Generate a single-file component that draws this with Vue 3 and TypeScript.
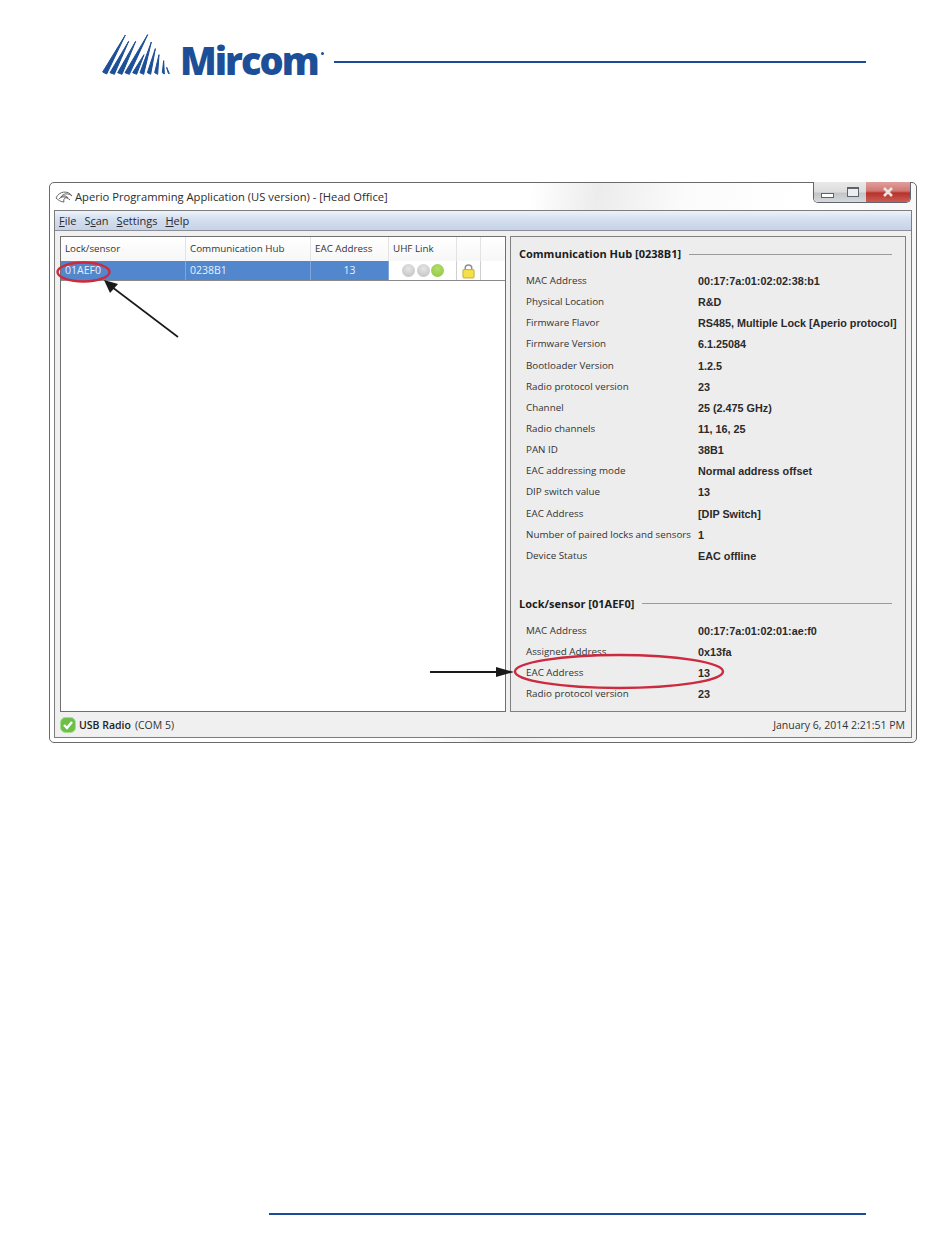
<script setup lang="ts">
interface Row { label: string; value: string }
const hubRows: Row[] = [
  { label: 'MAC Address', value: '00:17:7a:01:02:02:38:b1' },
  { label: 'Physical Location', value: 'R&D' },
  { label: 'Firmware Flavor', value: 'RS485, Multiple Lock [Aperio protocol]' },
  { label: 'Firmware Version', value: '6.1.25084' },
  { label: 'Bootloader Version', value: '1.2.5' },
  { label: 'Radio protocol version', value: '23' },
  { label: 'Channel', value: '25 (2.475 GHz)' },
  { label: 'Radio channels', value: '11, 16, 25' },
  { label: 'PAN ID', value: '38B1' },
  { label: 'EAC addressing mode', value: 'Normal address offset' },
  { label: 'DIP switch value', value: '13' },
  { label: 'EAC Address', value: '[DIP Switch]' },
  { label: 'Number of paired locks and sensors', value: '1' },
  { label: 'Device Status', value: 'EAC offline' }
]
const lockRows: Row[] = [
  { label: 'MAC Address', value: '00:17:7a:01:02:01:ae:f0' },
  { label: 'Assigned Address', value: '0x13fa' },
  { label: 'EAC Address', value: '13' },
  { label: 'Radio protocol version', value: '23' }
]
const strokes = [
  '38,156 50,162 106,45',
  '60,158 73,163 116,64',
  '83,158 96,163 137,64',
  '105,158 118,163 173,44',
  '128,158 140,163 162,104',
  '150,158 161,163 184,66',
  '172,158 182,163 196,86',
  '194,158 203,163 207,104',
  '217,158 223,162 221,122',
  '235,160 238,161 230,142'
]
</script>

<template>
  <div class="page">
    <header class="brand">
      <svg class="logo" viewBox="30 39 210 132" width="70" height="44">
        <polygon v-for="p in strokes" :key="p" :points="p" fill="#1c4f97" stroke="#1c4f97" stroke-width="3" stroke-linejoin="round" />
      </svg>
      <span class="wordmark">Mircom</span>
      <span class="reg"></span>
      <span class="rule"></span>
    </header>

    <section class="window">
      <div class="titlebar">
        <svg class="appicon" viewBox="0 0 18 14" width="18" height="14">
          <path d="M1 8 C4 1 13 0 17 6 C14 3 8 3 6 7 C9 5 12 6 13 8 C10 7 8 9 9 12 C6 12 3 10 1 8Z" fill="#fff" stroke="#666" stroke-width="1" />
          <path d="M4 9 C6 6 11 6 15 10" fill="none" stroke="#666" stroke-width="1" />
        </svg>
        <span class="title">Aperio Programming Application (US version) - [Head Office]</span>
        <div class="controls">
          <div class="ctl">
            <span class="min-glyph"></span>
          </div>
          <div class="ctl">
            <span class="max-glyph"></span>
          </div>
          <div class="ctl close">
            <svg viewBox="0 0 12 10" width="12" height="10">
              <path d="M2 1 L10 9 M10 1 L2 9" stroke="#e9e4e0" stroke-width="2.6" />
            </svg>
          </div>
        </div>
      </div>

      <div class="frame">
        <nav class="menubar">
          <span><u>F</u>ile</span>
          <span>S<u>c</u>an</span>
          <span><u>S</u>ettings</span>
          <span><u>H</u>elp</span>
        </nav>

        <div class="content">
          <div class="table">
            <div class="thead">
              <div class="c c1">Lock/sensor</div>
              <div class="c c2">Communication Hub</div>
              <div class="c c3">EAC Address</div>
              <div class="c c4">UHF Link</div>
              <div class="c c5"></div>
              <div class="c c6"></div>
            </div>
            <div class="trow">
              <div class="c c1 sel">01AEF0</div>
              <div class="c c2 sel">0238B1</div>
              <div class="c c3 sel num">13</div>
              <div class="c c4 leds">
                <i class="led off"></i>
                <i class="led off"></i>
                <i class="led on"></i>
              </div>
              <div class="c c5 lock">
                <svg viewBox="0 0 14 16" width="13" height="16">
                  <path d="M3.5 7 V4.5 C3.5 0.5 10.5 0.5 10.5 4.5 V7" fill="none" stroke="#8f8f8f" stroke-width="1.6" />
                  <rect x="1" y="6.5" width="12" height="9" rx="1" fill="#f4e04a" stroke="#c9a92a" />
                </svg>
              </div>
              <div class="c c6"></div>
            </div>
          </div>

          <div class="panel">
            <h3 class="legend first"><span>Communication Hub [0238B1]</span><i></i></h3>
            <dl class="props hub">
              <template v-for="r in hubRows" :key="r.label">
                <dt>{{ r.label }}</dt>
                <dd>{{ r.value }}</dd>
              </template>
            </dl>
            <h3 class="legend second"><span>Lock/sensor [01AEF0]</span><i></i></h3>
            <dl class="props lockp">
              <template v-for="r in lockRows" :key="r.label">
                <dt>{{ r.label }}</dt>
                <dd>{{ r.value }}</dd>
              </template>
            </dl>
          </div>
        </div>

        <footer class="status">
          <svg viewBox="0 0 16 16" width="16" height="16">
            <rect x="0.5" y="0.5" width="15" height="15" rx="5" fill="#6cc04a" stroke="#a9dc8f" />
            <path d="M4 8 L7 11 L12 5" fill="none" stroke="#fff" stroke-width="2.4" />
          </svg>
          <b>USB Radio</b>
          <span class="com">(COM 5)</span>
          <span class="date">January 6, 2014 2:21:51 PM</span>
        </footer>
      </div>
    </section>

    <div class="foot-rule"></div>

    <svg class="marks" viewBox="0 0 950 1260" width="950" height="1260">
      <ellipse cx="83.5" cy="272" rx="26" ry="9.5" fill="none" stroke="#cc2a3e" stroke-width="2.4" />
      <ellipse cx="619" cy="671.5" rx="104" ry="16.5" fill="none" stroke="#cc2a3e" stroke-width="2.4" />
      <path d="M178 337 L112 287" stroke="#1a1a1a" stroke-width="1.6" />
      <polygon points="104,280 118,284 110,293" fill="#1a1a1a" />
      <path d="M430 672 L498 672" stroke="#1a1a1a" stroke-width="1.8" />
      <polygon points="514,672 496,667 496,677" fill="#1a1a1a" />
    </svg>
  </div>
</template>

<style scoped>
.page {
  position: relative;
  width: 950px;
  height: 1260px;
  background: #fff;
  overflow: hidden;
  font-family: "Liberation Sans", Arial, sans-serif;
  color: #222;
}
.brand {
  display: flex;
  align-items: center;
  height: 58px;
  padding: 33px 84px 91px 100px;
}
.logo { flex: none; margin-top: -14px; }
.wordmark {
  margin-left: 10px;
  font-family: "Open Sans", sans-serif;
  font-weight: 800;
  font-size: 38px;
  line-height: 44px;
  letter-spacing: -2px;
  color: #1c4f97;
  margin-top: -4px;
}
.reg {
  width: 3px;
  height: 3px;
  border-radius: 50%;
  background: #1c4f97;
  margin: -18px 0 0 3px;
}
.rule {
  flex: 1;
  height: 2px;
  margin-left: 10px;
  background: #1d4a96;
}
.window {
  box-sizing: border-box;
  position: relative;
  width: 868px;
  height: 561px;
  margin-left: 49px;
  display: flex;
  flex-direction: column;
  border: 1px solid #6a6a6a;
  border-radius: 5px;
  background: linear-gradient(100deg, #fff 0%, #fff 50%, #ececec 57%, #fbfbfb 66%, #fff 78%, #f2f2f2 100%);
}
.titlebar {
  height: 27px;
  flex: none;
  display: flex;
  align-items: center;
  padding-left: 5px;
  position: relative;
}
.appicon { flex: none; }
.title {
  margin-left: 2px;
  font-family: "Open Sans", sans-serif;
  font-size: 11.2px;
  color: #2b2b2b;
  white-space: nowrap;
}
.controls {
  position: absolute;
  top: -1px;
  right: 5px;
  height: 20px;
  display: flex;
  border: 1px solid #5f6670;
  border-top: none;
  border-radius: 0 0 5px 5px;
  overflow: hidden;
}
.ctl {
  width: 26px;
  display: flex;
  align-items: center;
  justify-content: center;
  background: linear-gradient(#e9e9e9, #dcdcdc 50%, #c2c5c8 55%, #d6d8da);
}
.close {
  width: 44px;
  background: linear-gradient(#e0a09c, #d27672 45%, #b8322b 55%, #cc5d54);
}
.min-glyph {
  width: 11px;
  height: 3px;
  margin-top: 6px;
  border: 1px solid #5a6470;
  background: #fff;
}
.max-glyph {
  box-sizing: border-box;
  width: 12px;
  height: 10px;
  border: 1px solid #5a6470;
  border-top-width: 2px;
  background: #eee;
  box-shadow: inset 0 0 0 2px #eee;
}
.frame {
  flex: 1;
  margin: 0 4px 4px;
  display: flex;
  flex-direction: column;
  border: 1px solid #7d7d7d;
  background: #f0f0f0;
  min-height: 0;
}
.menubar {
  box-sizing: border-box;
  height: 20px;
  flex: none;
  display: flex;
  align-items: center;
  gap: 8px;
  padding-left: 4px;
  background: linear-gradient(#eef3fa, #d5e0f0 40%, #c6d3e8);
  border-bottom: 1px solid #8b8f96;
  font-family: "Open Sans", sans-serif;
  font-size: 11px;
  color: #2a2a2a;
}
.content {
  display: flex;
  gap: 4px;
  padding: 5px 5px 0;
  flex: none;
  height: 481px;
  box-sizing: border-box;
}
.table {
  box-sizing: border-box;
  width: 446px;
  border: 1px solid #707070;
  background: #fff;
  font-family: "Open Sans", sans-serif;
  font-size: 10.5px;
  color: #333;
}
.thead, .trow { display: flex; }
.thead { height: 24px; background: linear-gradient(#fff, #f7f7f7); font-size: 9.8px; }
.thead .c { border-right: 1px solid #e3e3e3; line-height: 24px; }
.trow { height: 19px; border-bottom: 1px solid #8a8a8a; }
.c { box-sizing: border-box; padding-left: 4px; flex: none; white-space: nowrap; }
.c1 { width: 125px; }
.c2 { width: 125px; }
.c3 { width: 78px; }
.c4 { width: 68px; }
.c5 { width: 24px; padding: 0; }
.c6 { width: 26px; }
.thead .c6 { border-right: none; }
.sel {
  background: #5287ce;
  color: #e8f0fb;
  line-height: 19px;
  border-right: 1px solid #7fa6dc;
}
.num { text-align: center; padding-left: 0; padding-right: 0; }
.leds {
  display: flex;
  align-items: center;
  gap: 1.5px;
  padding-left: 13px;
  border-right: 1px solid #cfcfcf;
}
.led {
  width: 13px;
  height: 13px;
  border-radius: 50%;
  flex: none;
}
.off { background: radial-gradient(circle at 50% 35%, #e6e6e6, #bdbdbd); }
.on { background: radial-gradient(circle at 50% 35%, #b4dd6a, #8cc63f); }
.lock {
  display: flex;
  align-items: center;
  justify-content: center;
  border-right: 1px solid #cfcfcf;
}
.panel {
  box-sizing: border-box;
  width: 396px;
  position: relative;
  border: 1px solid #808080;
  background: #ededed;
  padding: 0 13px 0 8px;
}
.legend {
  display: flex;
  align-items: center;
  gap: 8px;
  margin: 0;
  font-family: "Open Sans", sans-serif;
  font-weight: 700;
  font-size: 11px;
  line-height: 16px;
  color: #1c1c1c;
  white-space: nowrap;
}
.legend i { flex: 1; height: 1px; background: #9a9a9a; }
.first { margin-top: 9px; }
.second { margin-top: 29px; }
.props {
  display: grid;
  grid-template-columns: 172px 1fr;
  margin: 0;
  padding-left: 7px;
}
.hub { margin-top: 9px; grid-auto-rows: 21.15px; }
.lockp { margin-top: 9px; grid-auto-rows: 21px; }
dt {
  margin: 0;
  font-family: "Open Sans", sans-serif;
  font-size: 9.8px;
  line-height: 20px;
  color: #333;
  white-space: nowrap;
}
dd {
  margin: 0;
  font-weight: 700;
  font-size: 10.8px;
  line-height: 21px;
  color: #2a2a2a;
  white-space: nowrap;
}
.status {
  flex: 1;
  display: flex;
  align-items: center;
  padding: 0 6px 0 5px;
  font-family: "Open Sans", sans-serif;
  font-size: 10.5px;
  color: #333;
}
.status b { margin-left: 3px; font-weight: 600; color: #222; }
.com { margin-left: 4px; }
.date { margin-left: auto; }
.foot-rule {
  height: 2px;
  margin: 470px 84px 0 269px;
  background: #1d4a96;
}
.marks {
  position: absolute;
  left: 0;
  top: 0;
  pointer-events: none;
}
u { text-decoration: underline; }
</style>
